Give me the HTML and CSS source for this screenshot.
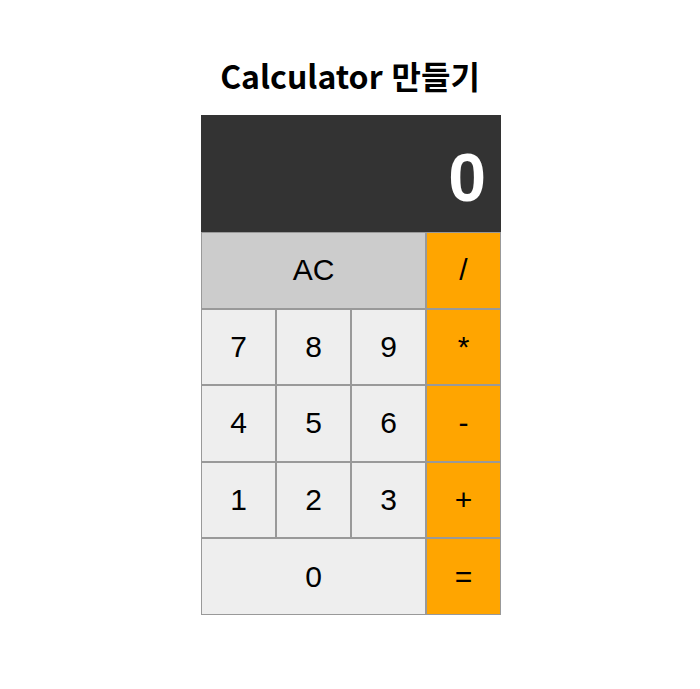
FILE: index.html
```html
<!DOCTYPE html>
<html lang="ko">
<head>
<meta charset="utf-8">
<title>Calculator 만들기</title>
<link rel="stylesheet" href="styles.css">
</head>
<body>
<main class="page">
  <h1 class="title">Calculator 만들기</h1>
  <div class="calc">
    <div class="display">0</div>
    <div class="keys">
      <button class="key key-ac span-3">AC</button>
      <button class="key key-op">/</button>
      <button class="key">7</button>
      <button class="key">8</button>
      <button class="key">9</button>
      <button class="key key-op">*</button>
      <button class="key">4</button>
      <button class="key">5</button>
      <button class="key">6</button>
      <button class="key key-op">-</button>
      <button class="key">1</button>
      <button class="key">2</button>
      <button class="key">3</button>
      <button class="key key-op">+</button>
      <button class="key span-3">0</button>
      <button class="key key-op">=</button>
    </div>
  </div>
</main>
</body>
</html>
```
FILE: styles.css
```css
html, body {
  margin: 0;
  padding: 0;
  background: #ffffff;
}

.page {
  padding-top: 50px;
}

.title {
  margin: 0 0 15px 0;
  text-align: center;
  font-family: "Noto Sans CJK KR", "Noto Sans", sans-serif;
  font-weight: 700;
  font-size: 32px;
  line-height: 50px;
  color: #000;
}

.calc {
  width: 300px;
  margin-left: calc(50% - 149px);
}

.display {
  height: 117px;
  box-sizing: border-box;
  background: #333333;
  color: #ffffff;
  font-family: "Liberation Sans", Arial, sans-serif;
  font-weight: 700;
  font-size: 68px;
  padding-top: 8px;
  line-height: 109px;
  text-align: right;
  padding-right: 15px;
}

.keys {
  display: grid;
  grid-template-columns: repeat(4, 75px);
  grid-auto-rows: 76.6px;
}

.key {
  margin: 0;
  padding: 0;
  box-sizing: border-box;
  border: 1px solid #999999;
  background: #eeeeee;
  color: #000;
  font-family: "Liberation Sans", Arial, sans-serif;
  font-size: 30px;
  border-radius: 0;
}

.span-3 {
  grid-column: span 3;
}

.key-ac {
  background: #cccccc;
}

.key-op {
  background: #ffa500;
}
```
